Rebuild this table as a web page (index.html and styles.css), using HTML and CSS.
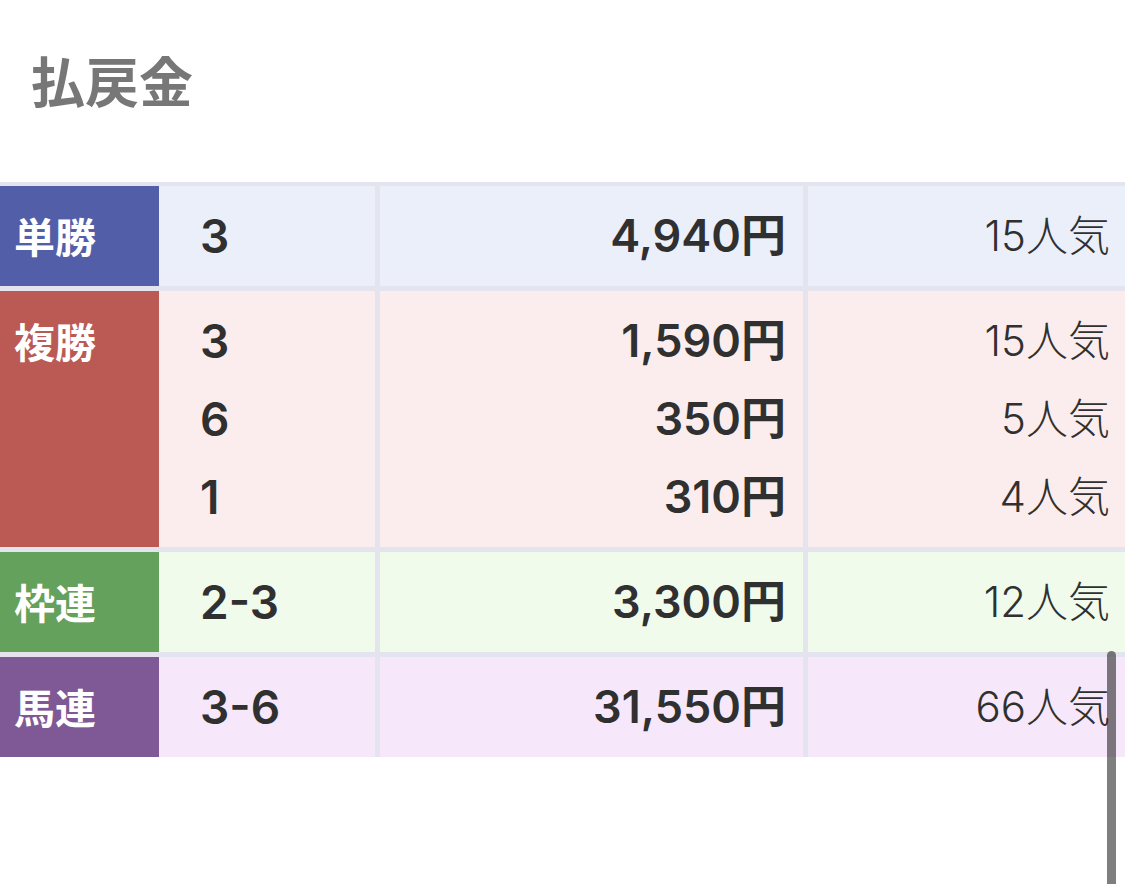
FILE: index.html
```html
<!DOCTYPE html>
<html lang="ja">
<head>
<meta charset="utf-8">
<link rel="stylesheet" href="styles.css">
</head>
<body>
<h2 class="title">払戻金</h2>
<div class="payout">
  <div class="row win">
    <div class="label">単勝</div>
    <div class="nums"><div class="line">3</div></div>
    <div class="amount"><div class="line">4,940円</div></div>
    <div class="pop"><div class="line">15人気</div></div>
  </div>
  <div class="row place">
    <div class="label">複勝</div>
    <div class="nums"><div class="line">3</div><div class="line">6</div><div class="line">1</div></div>
    <div class="amount"><div class="line">1,590円</div><div class="line">350円</div><div class="line">310円</div></div>
    <div class="pop"><div class="line">15人気</div><div class="line">5人気</div><div class="line">4人気</div></div>
  </div>
  <div class="row bracket">
    <div class="label">枠連</div>
    <div class="nums"><div class="line">2-3</div></div>
    <div class="amount"><div class="line">3,300円</div></div>
    <div class="pop"><div class="line">12人気</div></div>
  </div>
  <div class="row quinella">
    <div class="label">馬連</div>
    <div class="nums"><div class="line">3-6</div></div>
    <div class="amount"><div class="line">31,550円</div></div>
    <div class="pop"><div class="line">66人気</div></div>
  </div>
</div>
<div class="scrollbar"></div>
</body>
</html>
```

FILE: styles.css
```css
html, body {
  margin: 0;
  padding: 0;
  background: #ffffff;
}
body {
  font-family: Inter, "Noto Sans CJK JP", sans-serif;
  color: #303030;
  width: 1125px;
  height: 884px;
  overflow: hidden;
  position: relative;
}
.title {
  margin: 0;
  padding: 50px 0 0 31px;
  height: 182px;
  box-sizing: border-box;
  font-family: "Noto Sans CJK JP", sans-serif;
  font-size: 54px;
  line-height: 60px;
  font-weight: 700;
  color: #777777;
}
.payout {
  background: #e4e4ee;
  padding-top: 4px;
  display: flex;
  flex-direction: column;
  gap: 5px;
}
.row {
  display: grid;
  grid-template-columns: 159px 216px 428px 1fr;
}
.row > div {
  padding: 11px 0;
}
.line {
  line-height: 78px;
  height: 78px;
  white-space: nowrap;
}
.label {
  padding-left: 14px !important;
  font-family: "Noto Sans CJK JP", sans-serif;
  font-size: 41px;
  font-weight: 700;
  color: #ffffff;
  line-height: 76px;
}
.nums {
  padding-left: 41px !important;
  font-size: 46px;
  font-weight: 600;
}
.amount {
  margin-left: 5px;
  padding-right: 17px !important;
  text-align: right;
  font-size: 45px;
  font-weight: 600;
}
.pop {
  margin-left: 5px;
  padding-right: 15px !important;
  text-align: right;
  font-size: 42px;
  font-weight: 300;
}
.win .label { background: #535ea8; }
.win > div:not(.label) { background: #ebeffa; }
.place .label { background: #bb5955; }
.place > div:not(.label) { background: #fbeded; }
.bracket .label { background: #64a15d; }
.bracket > div:not(.label) { background: #f0fbec; }
.quinella .label { background: #7f5995; }
.quinella > div:not(.label) { background: #f6e8fa; }
.scrollbar {
  position: absolute;
  left: 1107px;
  top: 651px;
  width: 9px;
  height: 240px;
  border-radius: 5px;
  background: rgba(0, 0, 0, 0.5);
}
```
